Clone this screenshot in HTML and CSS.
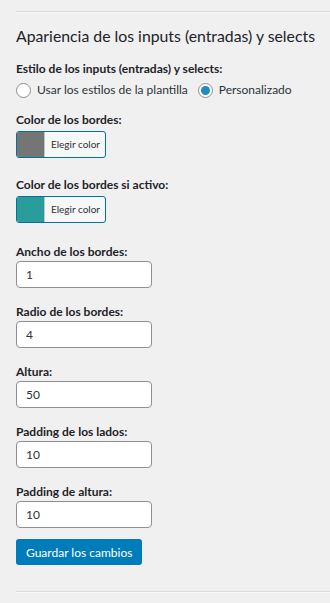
FILE: index.html
```html
<!DOCTYPE html>
<html>
<head>
  <title>Apariencia de los inputs</title>
  <link rel="stylesheet" href="styles.css">
</head>
<body>
  <hr class="sep">

  <h2>Apariencia de los inputs (entradas) y selects</h2>

  <div class="field first">
    <label class="field-label">Estilo de los inputs (entradas) y selects:</label>
    <div class="radios">
      <label class="radio"><span class="dot"></span>Usar los estilos de la plantilla</label>
      <label class="radio"><span class="dot checked"></span>Personalizado</label>
    </div>
  </div>

  <div class="field color-field">
    <label class="field-label">Color de los bordes:</label>
    <button class="color-btn"><span class="swatch grey"></span><span class="color-text">Elegir color</span></button>
  </div>

  <div class="field color-field">
    <label class="field-label">Color de los bordes si activo:</label>
    <button class="color-btn"><span class="swatch teal"></span><span class="color-text">Elegir color</span></button>
  </div>

  <div class="field after-color">
    <label class="field-label">Ancho de los bordes:</label>
    <input type="text" value="1">
  </div>

  <div class="field">
    <label class="field-label">Radio de los bordes:</label>
    <input type="text" value="4">
  </div>

  <div class="field">
    <label class="field-label">Altura:</label>
    <input type="text" value="50">
  </div>

  <div class="field">
    <label class="field-label">Padding de los lados:</label>
    <input type="text" value="10">
  </div>

  <div class="field">
    <label class="field-label">Padding de altura:</label>
    <input type="text" value="10">
  </div>

  <button class="save">Guardar los cambios</button>

  <hr class="sep bottom">
</body>
</html>
```

FILE: styles.css
```css
body {
  margin: 0;
  padding: 0 0 0 16px;
  background-color: #f0f0f1;
  color: #1d2327;
  font-family: Lato, sans-serif;
  font-size: 12px;
}

.sep {
  margin: 11px 0 0;
  border: none;
  border-top: 1px solid #dcdcde;
  border-bottom: 1px solid #f6f7f7;
}

.sep.bottom {
  margin-top: 26px;
}

h2 {
  font-size: 15.8px;
  font-weight: 400;
  line-height: 22px;
  margin: 12px 0 0;
  white-space: nowrap;
}

.field {
  margin-top: 15px;
}

.field.first {
  margin-top: 13px;
}

.field.color-field {
  margin-top: 12px;
}

.field.color-field + .color-field {
  margin-top: 18px;
}

.field.after-color {
  margin-top: 20px;
}

.field-label {
  display: block;
  font-weight: 700;
  line-height: 18px;
}

.color-field .field-label {
  margin-bottom: 2px;
}

.radios {
  display: flex;
  gap: 10px;
  margin-top: 3px;
}

.radio {
  display: flex;
  align-items: center;
  line-height: 18px;
  color: #2c3338;
  white-space: nowrap;
}

.dot {
  width: 15px;
  height: 15px;
  box-sizing: border-box;
  border: 1px solid #8c8f94;
  border-radius: 50%;
  background-color: #fff;
  margin-right: 6px;
  display: flex;
  align-items: center;
  justify-content: center;
}

.dot.checked::before {
  content: "";
  width: 9px;
  height: 9px;
  border-radius: 50%;
  background-color: #1e8cbe;
}

.color-btn {
  display: flex;
  height: 27px;
  width: 90px;
  padding: 0;
  border: 1px solid #0071a1;
  border-radius: 3px;
  background-color: #f6f7f7;
  overflow: hidden;
  cursor: pointer;
}

.swatch {
  width: 27px;
  height: 100%;
  border-right: 1px solid #c3c4c7;
}

.swatch.grey {
  background-color: #757575;
}

.swatch.teal {
  background-color: #2a9d9b;
}

.color-text {
  flex: 1;
  padding-left: 6px;
  font-family: Lato, sans-serif;
  font-size: 10px;
  line-height: 25px;
  color: #2c3338;
  text-align: left;
}

input {
  display: block;
  box-sizing: border-box;
  width: 136px;
  height: 27px;
  margin: 0;
  padding: 0 9px;
  border: 1px solid #8c8f94;
  border-radius: 4px;
  background-color: #fff;
  color: #2c3338;
  font-family: Lato, sans-serif;
  font-size: 12px;
}

.save {
  display: block;
  margin-top: 11px;
  height: 26px;
  padding: 0 10px;
  border: none;
  border-radius: 3px;
  background-color: #007cba;
  color: #fff;
  font-family: Lato, sans-serif;
  font-size: 12px;
  cursor: pointer;
}
```
